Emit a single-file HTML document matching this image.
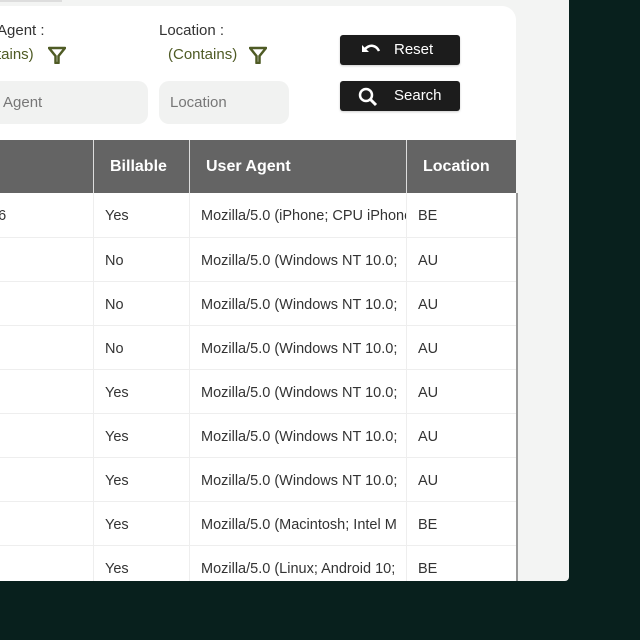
<!DOCTYPE html>
<html><head><style>
*{margin:0;padding:0;box-sizing:border-box}
body{width:640px;height:640px;background:#08201d;position:relative;overflow:hidden;font-family:"Liberation Sans",sans-serif;color:#333}
.panel{position:absolute;left:0;top:0;width:569px;height:581px;background:#f3f4f3;border-bottom-right-radius:4px}
.card{position:absolute;left:0;top:6px;width:516px;height:575px;background:#fff;border-top-right-radius:14px}
.lbl{position:absolute;font-size:15px;color:#333}
.grn{position:absolute;font-size:15px;color:#4f5b25}
.inp{position:absolute;top:81px;height:43px;background:#f1f2f1;border-radius:10px;font-size:15px;color:#777;padding:13px 11px}
.btn{position:absolute;left:340px;width:120px;height:30px;background:#1c1c1c;border-radius:3px;color:#fff;font-size:15px;box-shadow:0 1px 2px rgba(0,0,0,.2)}
.btn span{position:absolute;left:54px;top:6px}
.btn svg{position:absolute;left:18px;top:6px}
.wrap{position:absolute;left:0;top:140px;width:516px;height:441px;overflow:hidden}
table{position:absolute;left:-30px;top:0;width:546px;border-collapse:collapse;table-layout:fixed}
th{background:#646464;color:#fff;font-size:16px;font-weight:bold;text-align:left;height:53px;padding-left:16px;border-left:1px solid #ddd;white-space:nowrap;overflow:hidden}
td{height:44px;font-size:14.5px;color:#333;padding:3px 0 0 11px;border-bottom:1px solid #eee;border-left:1px solid #eee;white-space:nowrap;overflow:hidden}
</style></head><body>
<div class="panel"></div>
<div style="position:absolute;left:0;top:0;width:62px;height:2px;background:#ddd"></div>
<div class="card"></div>
<div class="lbl" style="left:-3px;top:22px">Agent :</div>
<div class="grn" style="left:-3px;top:46px">tains)</div>
<svg style="position:absolute;left:48px;top:46px" width="18" height="18" viewBox="0 0 18 18"><path d="M1 2H17L10.5 10V17H7.5V10Z" fill="none" stroke="#4f5b25" stroke-width="2.5" stroke-linejoin="round"/></svg>
<div class="lbl" style="left:159px;top:22px">Location :</div>
<div class="grn" style="left:168px;top:46px">(Contains)</div>
<svg style="position:absolute;left:249px;top:46px" width="18" height="18" viewBox="0 0 18 18"><path d="M1 2H17L10.5 10V17H7.5V10Z" fill="none" stroke="#4f5b25" stroke-width="2.5" stroke-linejoin="round"/></svg>
<div class="inp" style="left:-20px;width:168px;padding-left:23px">Agent</div>
<div class="inp" style="left:159px;width:130px">Location</div>
<div class="btn" style="top:35px"><svg width="24" height="18" viewBox="0 0 24 18"><path d="M4 4V11H11Z" fill="#fff"/><path d="M7 8C12 3 18 4 21 10" fill="none" stroke="#fff" stroke-width="2.5"/></svg><span>Reset</span></div>
<div class="btn" style="top:81px"><svg width="22" height="20" viewBox="0 0 22 20"><circle cx="8" cy="8" r="6" fill="none" stroke="#fff" stroke-width="2.5"/><path d="M12.5 12.5L18 18" stroke="#fff" stroke-width="3"/></svg><span>Search</span></div>
<div class="wrap">
<table>
<colgroup><col style="width:123px"><col style="width:96px"><col style="width:217px"><col style="width:110px"></colgroup>
<tr><th></th><th>Billable</th><th>User Agent</th><th>Location</th></tr>
<tr><td>&nbsp;&nbsp;36</td><td>Yes</td><td>Mozilla/5.0 (iPhone; CPU iPhone</td><td>BE</td></tr>
<tr><td></td><td>No</td><td>Mozilla/5.0 (Windows NT 10.0;</td><td>AU</td></tr>
<tr><td></td><td>No</td><td>Mozilla/5.0 (Windows NT 10.0;</td><td>AU</td></tr>
<tr><td></td><td>No</td><td>Mozilla/5.0 (Windows NT 10.0;</td><td>AU</td></tr>
<tr><td></td><td>Yes</td><td>Mozilla/5.0 (Windows NT 10.0;</td><td>AU</td></tr>
<tr><td></td><td>Yes</td><td>Mozilla/5.0 (Windows NT 10.0;</td><td>AU</td></tr>
<tr><td></td><td>Yes</td><td>Mozilla/5.0 (Windows NT 10.0;</td><td>AU</td></tr>
<tr><td></td><td>Yes</td><td>Mozilla/5.0 (Macintosh; Intel M</td><td>BE</td></tr>
<tr><td>&nbsp;&nbsp;7</td><td>Yes</td><td>Mozilla/5.0 (Linux; Android 10;</td><td>BE</td></tr>
</table>
</div>
<div style="position:absolute;left:516px;top:193px;width:2px;height:388px;background:#999"></div>
<div style="position:absolute;left:0;top:581px;width:640px;height:59px;background:#08201d"></div>
</body></html>
